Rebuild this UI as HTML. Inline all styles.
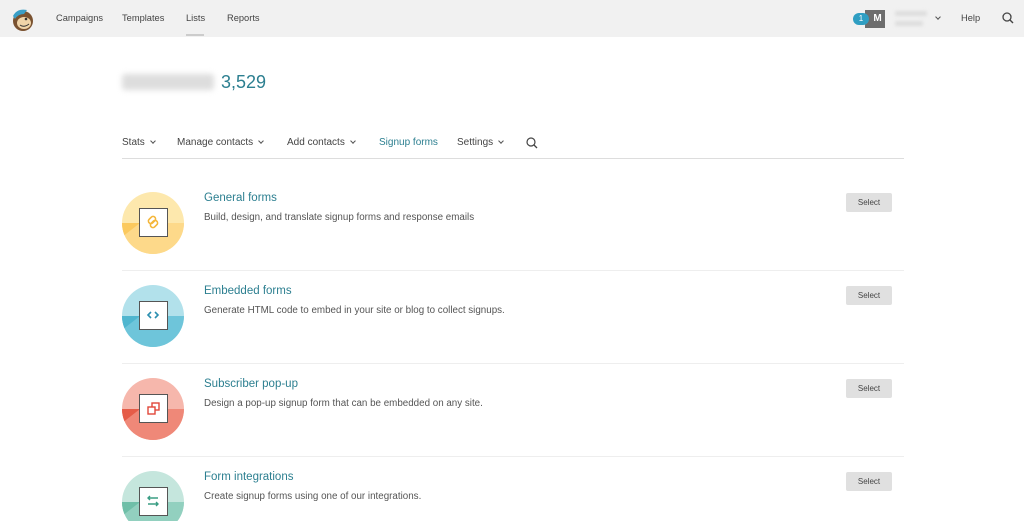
<!DOCTYPE html>
<html><head><style>
*{margin:0;padding:0;box-sizing:border-box}
html,body{width:1024px;height:521px;overflow:hidden}
body{background:#fff;font-family:"Liberation Sans",sans-serif;color:#444;position:relative}
.hdr{position:absolute;left:0;top:0;width:1024px;height:37px;background:#f1f1f1}
.a{position:absolute;font-size:9.3px;color:#444}
.nav{position:absolute;top:137px;font-size:10px;color:#444}
.chev{display:inline-block;width:4px;height:4px;border-right:1.2px solid #555;border-bottom:1.2px solid #555;transform:rotate(45deg);margin-left:6px;position:relative;top:-2px}
.circ{position:absolute;left:122px;width:62px;height:62px;border-radius:50%;overflow:hidden}
.circ .bot{position:absolute;left:0;top:31px;width:62px;height:31px}
.circ .tri{position:absolute;left:0;top:31px;width:0;height:0;border-top:14px solid;border-right:18px solid transparent;}
.sq{position:absolute;left:17px;top:16px;width:29px;height:29px;background:#fff;border:1.5px solid #555}
.t{position:absolute;left:204px;font-size:11.5px;color:#2c7f90}
.d{position:absolute;left:204px;font-size:9.8px;color:#555}
.btn{position:absolute;left:846px;width:46px;height:19px;background:#e0e0e0;border-radius:2px;font-size:8px;color:#444;text-align:center;line-height:19px}
.sep{position:absolute;left:122px;width:782px;height:1px;background:#eee}
</style></head><body>
<div class="hdr"></div>
<svg style="position:absolute;left:9px;top:6px" width="26" height="26" viewBox="0 0 26 26"><ellipse cx="14" cy="15" rx="10" ry="10" fill="#7a5230"/><ellipse cx="15" cy="17" rx="7" ry="6" fill="#f0d4a8"/><path d="M4 10 Q8 2 18 4 L15 8 Q9 8 6 13Z" fill="#3a9fc7"/><path d="M11 19 Q15 22 20 18" stroke="#333" fill="none"/><circle cx="17" cy="13" r="1.3" fill="#333"/></svg>
<div class="a" style="left:56px;top:13px">Campaigns</div>
<div class="a" style="left:122px;top:13px">Templates</div>
<div class="a" style="left:186px;top:13px">Lists</div>
<div style="position:absolute;left:186px;top:34px;width:18px;height:2px;background:#ccc"></div>
<div class="a" style="left:227px;top:13px">Reports</div>
<div style="position:absolute;left:865px;top:10px;width:20px;height:18px;background:#6d6d6d;color:#fff;font-size:10px;font-weight:bold;line-height:18px;text-align:center;padding-left:5px">M</div>
<div style="position:absolute;left:853px;top:13px;width:16px;height:12px;border-radius:6px;background:#2f9ec2;color:#fff;font-size:8px;line-height:12px;text-align:center">1</div>
<div style="position:absolute;left:895px;top:11px;width:32px;height:5px;background:#ddd;border-radius:2px;filter:blur(1.5px)"></div>
<div style="position:absolute;left:895px;top:21px;width:28px;height:5px;background:#ddd;border-radius:2px;filter:blur(1.5px)"></div>
<span class="chev" style="position:absolute;left:930px;top:15px"></span>
<div class="a" style="left:961px;top:13px">Help</div>
<svg style="position:absolute;left:1002px;top:12px" width="12" height="12" viewBox="0 0 12 12"><circle cx="5" cy="5" r="4" stroke="#444" stroke-width="1.3" fill="none"/><path d="M8 8L11 11" stroke="#444" stroke-width="1.4"/></svg>

<div style="position:absolute;left:122px;top:74px;width:92px;height:16px;background:#ddd;border-radius:3px;filter:blur(3px)"></div>
<div style="position:absolute;left:221px;top:72px;font-size:18px;color:#2c7f90">3,529</div>

<div class="nav" style="left:122px">Stats<span class="chev"></span></div>
<div class="nav" style="left:177px">Manage contacts<span class="chev"></span></div>
<div class="nav" style="left:287px">Add contacts<span class="chev"></span></div>
<div class="nav" style="left:379px;color:#2c7f90">Signup forms</div>
<div class="nav" style="left:457px">Settings<span class="chev"></span></div>
<svg style="position:absolute;left:526px;top:137px" width="12" height="12" viewBox="0 0 12 12"><circle cx="5" cy="5" r="4" stroke="#444" stroke-width="1.2" fill="none"/><path d="M8 8L11 11" stroke="#444" stroke-width="1.3"/></svg>
<div class="sep" style="top:158px;background:#ddd"></div>

<div class="circ" style="top:192px;background:#fde8ad"><div class="bot" style="background:#fdd98a"></div><div class="tri" style="border-top-color:#fbc95e"></div><div class="sq"><svg width="26" height="26" viewBox="0 0 26 26"><g stroke="#f4b63a" stroke-width="1.6" fill="none"><rect x="9.5" y="7" width="5" height="8" rx="2.5" transform="rotate(45 12 11)"/><rect x="11.5" y="11" width="5" height="8" rx="2.5" transform="rotate(45 14 15)"/></g></svg></div></div>
<div class="t" style="top:192px">General forms</div>
<div class="d" style="top:212px">Build, design, and translate signup forms and response emails</div>
<div class="btn" style="top:193px">Select</div>
<div class="sep" style="top:270px"></div>

<div class="circ" style="top:285px;background:#b2e1eb"><div class="bot" style="background:#6ec5da"></div><div class="tri" style="border-top-color:#4fb6cf"></div><div class="sq"><svg width="26" height="26" viewBox="0 0 26 26"><path d="M11 10L8 13L11 16M15 10L18 13L15 16" stroke="#2b8fb0" stroke-width="1.6" fill="none"/></svg></div></div>
<div class="t" style="top:285px">Embedded forms</div>
<div class="d" style="top:305px">Generate HTML code to embed in your site or blog to collect signups.</div>
<div class="btn" style="top:286px">Select</div>
<div class="sep" style="top:363px"></div>

<div class="circ" style="top:378px;background:#f6b7ac"><div class="bot" style="background:#ef8878"></div><div class="tri" style="border-top-color:#e55c48"></div><div class="sq"><svg width="26" height="26" viewBox="0 0 26 26"><rect x="12" y="8" width="7" height="7" stroke="#e2483a" stroke-width="1.4" fill="none"/><rect x="8" y="12" width="7" height="7" stroke="#e2483a" stroke-width="1.4" fill="#fff"/></svg></div></div>
<div class="t" style="top:378px">Subscriber pop-up</div>
<div class="d" style="top:398px">Design a pop-up signup form that can be embedded on any site.</div>
<div class="btn" style="top:379px">Select</div>
<div class="sep" style="top:456px"></div>

<div class="circ" style="top:471px;background:#c5e6dd"><div class="bot" style="background:#92d0bf"></div><div class="tri" style="border-top-color:#6fbfa8"></div><div class="sq"><svg width="26" height="26" viewBox="0 0 26 26"><g stroke="#3a9d84" stroke-width="1.4" fill="none"><path d="M18 10H8M10 8L8 10L10 12M8 16H18M16 14L18 16L16 18"/></g></svg></div></div>
<div class="t" style="top:471px">Form integrations</div>
<div class="d" style="top:491px">Create signup forms using one of our integrations.</div>
<div class="btn" style="top:472px">Select</div>
</body></html>
